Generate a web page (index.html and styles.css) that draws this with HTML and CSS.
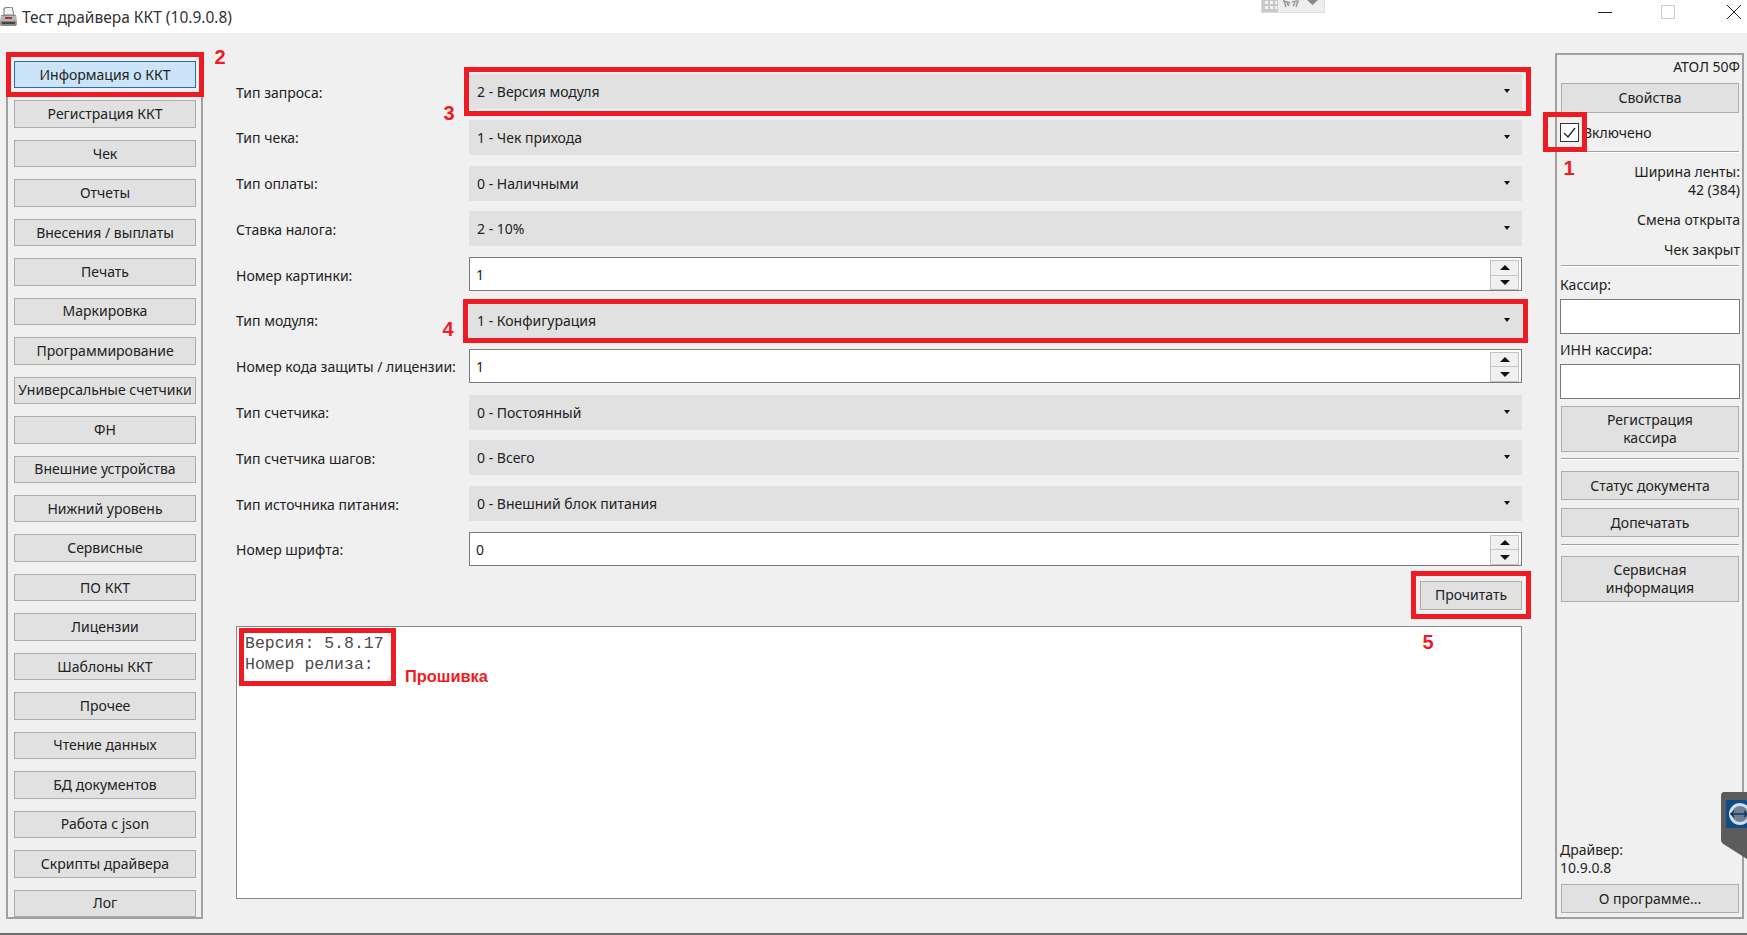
FILE: index.html
```html
<!DOCTYPE html>
<html lang="ru">

<head>
    <meta charset="UTF-8">
    <title>Тест драйвера ККТ (10.9.0.8)</title>
    <link rel="stylesheet" href="styles.css">
</head>

<body>
    <header class="titlebar">
        <svg class="app-icon" width="18" height="20" viewBox="0 0 18 20">
            <path d="M4 1 L12 0 L14 8 L4 8 Z" fill="#f4f4f4" stroke="#777" />
            <path d="M1 8 H16 L17 17 Q17 19 15 19 H2 Q0 19 0 17 Z" fill="#8a8a8a" />
            <rect x="1" y="9" width="15" height="5" fill="#b5b5b5" />
            <rect x="5" y="10" width="7" height="2" fill="#a33" />
            <rect x="2" y="15" width="13" height="2" fill="#444" />
        </svg>
        <span class="title">Тест драйвера ККТ (10.9.0.8)</span>
        <div class="mini-toolbar">
            <svg width="62" height="12" viewBox="0 0 62 12">
                <rect width="16" height="12" fill="#c8c8c8" />
                <g fill="#f4f4f4">
                    <rect x="3" y="1" width="3" height="3" />
                    <rect x="8" y="1" width="3" height="3" />
                    <rect x="13" y="1" width="2" height="3" />
                    <rect x="3" y="6" width="3" height="3" />
                    <rect x="8" y="6" width="3" height="3" />
                    <rect x="13" y="6" width="2" height="3" />
                </g>
                <path d="M24 7 L22 1 L28 3 M30 2 L36 1 L34 7 M25 3 L27 6 M33 3 L31 6" fill="none" stroke="#999" stroke-width="1.5" />
                <path d="M45 0 H56 L50.500 5 Z" fill="#888" />
            </svg>
        </div>
        <div class="win-controls">
            <svg width="146" height="16" viewBox="0 0 146 16">
                <path d="M0 7.500 H14" stroke="#222" />
                <rect x="63.500" y="0.500" width="13" height="13" fill="none" stroke="#ccc" />
                <path d="M129 0 L143 14 M143 0 L129 14" stroke="#222" fill="none" />
            </svg>
        </div>
    </header>

    <div class="workspace">
        <nav class="sidebar">
            <button class="btn nav-btn active">Информация о ККТ</button>
            <button class="btn nav-btn">Регистрация ККТ</button>
            <button class="btn nav-btn">Чек</button>
            <button class="btn nav-btn">Отчеты</button>
            <button class="btn nav-btn">Внесения / выплаты</button>
            <button class="btn nav-btn">Печать</button>
            <button class="btn nav-btn">Маркировка</button>
            <button class="btn nav-btn">Программирование</button>
            <button class="btn nav-btn">Универсальные счетчики</button>
            <button class="btn nav-btn">ФН</button>
            <button class="btn nav-btn">Внешние устройства</button>
            <button class="btn nav-btn">Нижний уровень</button>
            <button class="btn nav-btn">Сервисные</button>
            <button class="btn nav-btn">ПО ККТ</button>
            <button class="btn nav-btn">Лицензии</button>
            <button class="btn nav-btn">Шаблоны ККТ</button>
            <button class="btn nav-btn">Прочее</button>
            <button class="btn nav-btn">Чтение данных</button>
            <button class="btn nav-btn">БД документов</button>
            <button class="btn nav-btn">Работа с json</button>
            <button class="btn nav-btn">Скрипты драйвера</button>
            <button class="btn nav-btn">Лог</button>
        </nav>

        <main class="content">
            <div class="form-grid">
                <label>Тип запроса:</label>
                <div class="combo">2 - Версия модуля</div>
                <label>Тип чека:</label>
                <div class="combo">1 - Чек прихода</div>
                <label>Тип оплаты:</label>
                <div class="combo">0 - Наличными</div>
                <label>Ставка налога:</label>
                <div class="combo">2 - 10%</div>
                <label>Номер картинки:</label>
                <div class="spin">1<span class="spin-arrows"><i class="up"></i><i class="down"></i></span></div>
                <label>Тип модуля:</label>
                <div class="combo">1 - Конфигурация</div>
                <label>Номер кода защиты / лицензии:</label>
                <div class="spin">1<span class="spin-arrows"><i class="up"></i><i class="down"></i></span></div>
                <label>Тип счетчика:</label>
                <div class="combo">0 - Постоянный</div>
                <label>Тип счетчика шагов:</label>
                <div class="combo">0 - Всего</div>
                <label>Тип источника питания:</label>
                <div class="combo">0 - Внешний блок питания</div>
                <label>Номер шрифта:</label>
                <div class="spin">0<span class="spin-arrows"><i class="up"></i><i class="down"></i></span></div>
            </div>
            <div class="actions">
                <button class="btn read-btn">Прочитать</button>
            </div>
            <pre class="output">Версия: 5.8.17
Номер релиза:</pre>
        </main>

        <aside class="status">
            <div class="status-row device">АТОЛ 50Ф</div>
            <button class="btn side-btn props-btn">Свойства</button>
            <div class="enabled">
                <span class="check">
                    <svg width="17" height="17" viewBox="0 0 17 17">
                        <path d="M3 9 L7 13 L14 4" fill="none" stroke="#222" stroke-width="1.300" />
                    </svg>
                </span>
                <span class="enabled-text">Включено</span>
            </div>
            <hr class="line line-a">
            <div class="status-row tape">Ширина ленты:<br>42 (384)</div>
            <div class="status-row shift">Смена открыта</div>
            <div class="status-row receipt">Чек закрыт</div>
            <hr class="line line-b">
            <div class="field-label cashier">Кассир:</div>
            <div class="text-input input-a"></div>
            <div class="field-label inn">ИНН кассира:</div>
            <div class="text-input input-b"></div>
            <button class="btn side-btn tall reg-btn">Регистрация<br>кассира</button>
            <hr class="line line-c">
            <button class="btn side-btn doc-btn">Статус документа</button>
            <button class="btn side-btn reprint-btn">Допечатать</button>
            <hr class="line line-d">
            <button class="btn side-btn tall service-btn">Сервисная<br>информация</button>
            <div class="driver">Драйвер:<br>10.9.0.8</div>
            <button class="btn side-btn about-btn">О программе...</button>
        </aside>
    </div>
    <div class="bottom-line"></div>

    <!-- annotations on top of the screenshot -->
    <div class="mark mark-1"></div>
    <div class="mark mark-2"></div>
    <div class="mark mark-3"></div>
    <div class="mark mark-4"></div>
    <div class="mark mark-5"></div>
    <div class="mark mark-fw"></div>
    <span class="num num-1">1</span>
    <span class="num num-2">2</span>
    <span class="num num-3">3</span>
    <span class="num num-4">4</span>
    <span class="num num-5">5</span>
    <span class="note">Прошивка</span>

    <svg class="tv-tab" width="26" height="68" viewBox="0 0 26 68">
        <path d="M3 0 H26 V67 L4 53 Q0 51 0 48 V4 Q0 0 3 0 Z" fill="#5c5c5c" />
        <rect x="5" y="8" width="21" height="28" fill="#0f4c86" />
        <circle cx="19" cy="22" r="11" fill="#d6dde5" />
        <circle cx="19" cy="22" r="8" fill="#6d8099" />
        <path d="M10 22 H26 M13 19 L10 22 L13 25 M23 19 L26 22 L23 25" fill="none" stroke="#10335c" stroke-width="1.500" />
    </svg>
</body>

</html>
```

FILE: styles.css
```css
html,
body {
    margin: 0;
    height: 935px;
    overflow: hidden;
}

body {
    position: relative;
    background: #f0f0f0;
    color: #222;
    font-family: "Noto Sans", sans-serif;
    font-size: 14px;
    line-height: 18px;
}

.titlebar {
    position: relative;
    display: flex;
    align-items: center;
    height: 33px;
    background: #fff;
}

.app-icon {
    margin-top: 1px;
}

.title {
    margin-left: 4px;
    font-size: 15.500px;
    color: #333;
}

.mini-toolbar {
    position: absolute;
    top: 0;
    left: 1262px;
    width: 62px;
    height: 12px;
    background: #eee;
    box-shadow: 0 0 0 1px #ddd;
}

.mini-toolbar svg,
.win-controls svg {
    display: block;
}

.win-controls {
    position: absolute;
    top: 5px;
    left: 1598px;
}

.workspace {
    display: flex;
    height: 866px;
    padding: 20px 3px 0 6px;
}

.btn {
    display: block;
    margin: 0;
    padding: 0;
    font: inherit;
    color: inherit;
    background: #e1e1e1;
    border: 1px solid #adadad;
}

.sidebar {
    display: flex;
    flex-direction: column;
    gap: 12px;
    width: 197px;
    padding: 6px 5px 0 6px;
    border: 2px solid #a0a0a0;
    box-sizing: border-box;
}

.nav-btn {
    flex: 1;
}

.nav-btn.active {
    background: #cce4f7;
    border-color: #2a6ea8;
}

.content {
    display: flex;
    flex-direction: column;
    width: 1286px;
    margin: 0 33px;
    padding: 21px 0 20px;
    box-sizing: border-box;
}

.form-grid {
    display: grid;
    grid-template-columns: 233px 1053px;
    grid-auto-rows: 35px;
    row-gap: 10.800px;
}

.form-grid label {
    align-self: center;
    padding-top: 2px;
}

.combo {
    position: relative;
    padding-left: 8px;
    line-height: 35px;
    background: #e1e1e1;
}

/* little combo arrow */
.combo::after {
    content: "";
    position: absolute;
    top: 15px;
    right: 12px;
    border: 3px solid transparent;
    border-top: 4px solid #111;
}

.spin {
    position: relative;
    height: 34px;
    padding-left: 6px;
    line-height: 34px;
    background: #fff;
    border: 1px solid #7a7a7a;
    box-sizing: border-box;
}

.spin-arrows {
    position: absolute;
    top: 2px;
    right: 2px;
    display: flex;
    flex-direction: column;
    width: 27px;
    height: 28px;
    background: #f0f0f0;
    border: 1px solid #c4c4c4;
}

.spin-arrows i {
    flex: 1;
    display: flex;
    align-items: center;
    justify-content: center;
}

.spin-arrows .down {
    border-top: 1px solid #c4c4c4;
}

.spin-arrows i::after {
    content: "";
    border: 5px solid transparent;
}

.spin-arrows .up::after {
    border-top: 0;
    border-bottom: 5px solid #111;
}

.spin-arrows .down::after {
    border-bottom: 0;
    border-top: 5px solid #111;
}

.actions {
    display: flex;
    justify-content: flex-end;
    margin-top: 14px;
}

.read-btn {
    width: 102px;
    height: 29px;
}

.output {
    flex: 1;
    margin: 16px 0 0;
    padding: 6px 8px;
    font-family: "Liberation Mono", monospace;
    font-size: 16.500px;
    line-height: 21px;
    color: #4a4a4a;
    background: #fff;
    border: 1px solid #8a8a8a;
}

.status {
    display: flex;
    flex-direction: column;
    width: 189px;
    padding: 3px 2px 4px 3px;
    border: 2px solid #a0a0a0;
    box-sizing: border-box;
}

.status-row {
    text-align: right;
}

.side-btn {
    flex: none;
    width: 178px;
    height: 29px;
    margin-left: 1px;
}

.side-btn.tall {
    height: 46px;
}

.props-btn { height: 30px; margin-top: 7px; }
.enabled { display: flex; align-items: center; height: 19px; margin-top: 10px; }
.line-a { margin-top: 9px; }
.tape { margin-top: 10px; }
.shift { margin-top: 12px; }
.receipt { margin-top: 12px; }
.line-b { margin-top: 6px; }
.cashier { margin-top: 9px; }
.input-a { margin-top: 5px; }
.inn { margin-top: 7px; }
.input-b { margin-top: 5px; }
.reg-btn { margin-top: 7px; }
.line-c { margin-top: 6px; }
.doc-btn { margin-top: 11px; }
.reprint-btn { margin-top: 8px; }
.line-d { margin-top: 7px; }
.service-btn { margin-top: 10px; }
.driver { margin-top: auto; }
.about-btn { margin-top: 7px; }

.check {
    display: block;
    width: 17px;
    height: 17px;
    background: #fff;
    border: 1px solid #333;
}

.check svg {
    display: block;
}

.enabled-text {
    margin-left: 4px;
}

.line {
    width: 178px;
    height: 0;
    margin-bottom: 0;
    margin-left: 1px;
    border: 0;
    border-top: 1px solid #a0a0a0;
    border-bottom: 1px solid #fff;
}

.text-input {
    flex: none;
    height: 35px;
    background: #fff;
    border: 1px solid #7a7a7a;
    box-sizing: border-box;
}

.bottom-line {
    height: 2px;
    margin-top: 14px;
    background: #707070;
}

/* red annotation boxes */
.mark {
    position: absolute;
    border: 5px solid #ed1c24;
    box-sizing: border-box;
}

.mark-1 { left: 1543px; top: 112px; width: 44px; height: 40px; }
.mark-2 { left: 6px; top: 52px; width: 198px; height: 45px; }
.mark-3 { left: 464px; top: 67px; width: 1067px; height: 49px; }
.mark-4 { left: 463px; top: 299px; width: 1065px; height: 44px; }
.mark-5 { left: 1411px; top: 571px; width: 120px; height: 48px; }
.mark-fw { left: 239px; top: 628px; width: 157px; height: 58px; }

.num,
.note {
    position: absolute;
    font-family: "Liberation Sans", sans-serif;
    font-weight: 700;
    color: #ed1c24;
}

.num {
    font-size: 20px;
    line-height: 20px;
    transform: translateX(-50%);
}

.num-1 { left: 1569px; top: 158px; }
.num-2 { left: 220px; top: 47px; }
.num-3 { left: 449px; top: 103px; }
.num-4 { left: 448px; top: 319px; }
.num-5 { left: 1428px; top: 632px; }

.note {
    left: 405px;
    top: 666px;
    font-size: 16.400px;
    line-height: 20px;
}

.tv-tab {
    position: absolute;
    left: 1721px;
    top: 792px;
}
```
